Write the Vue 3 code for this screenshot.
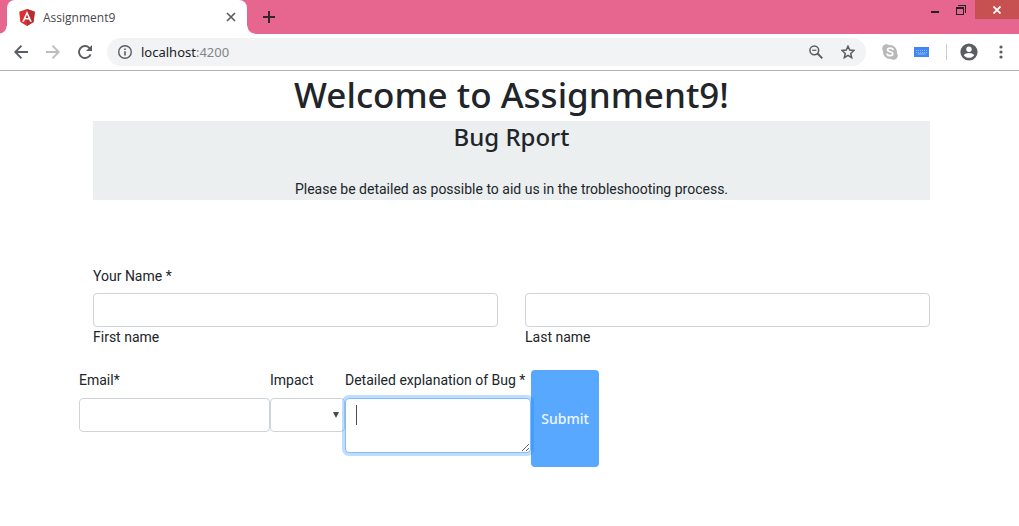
<script setup>
import { ref } from 'vue'

const address = ref('localhost:4200')
const firstName = ref('')
const lastName = ref('')
const email = ref('')
const impact = ref('')
const details = ref('')
</script>

<template>
  <div class="browser">
    <header class="tab-strip">
      <div class="tab">
        <svg class="favicon" width="16" height="17" viewBox="0 0 16 17" aria-hidden="true">
          <path fill="#dd2f32" d="M8 0 15.8 2.8 14.6 13 8 17 1.4 13 .2 2.8z" />
          <path fill="#b52e31" d="M8 0 15.8 2.8 14.6 13 8 17z" />
          <path fill="#fff" fill-rule="evenodd" d="M8 2 3.2 12.8H5L6 10.4h4l1 2.4h1.8zM8 5.4 9.4 8.9H6.6z" />
        </svg>
        <span class="tab-title">Assignment9</span>
        <button class="icon-button" type="button" aria-label="Close tab">
          <svg width="10" height="10" viewBox="0 0 10 10"><path d="M1 1l8 8M9 1 1 9" stroke="#5a5d61" stroke-width="1.7" /></svg>
        </button>
      </div>
      <button class="icon-button new-tab" type="button" aria-label="New tab">
        <svg width="12" height="12" viewBox="0 0 12 12"><path d="M6 0v12M0 6h12" stroke="#33262c" stroke-width="2" /></svg>
      </button>
      <div class="window-controls">
        <button class="icon-button minimize" type="button" aria-label="Minimize">
          <svg width="8" height="10" viewBox="0 0 8 10"><path d="M0 3h8v2H0z" fill="#222" /></svg>
        </button>
        <button class="icon-button restore" type="button" aria-label="Restore">
          <svg width="10" height="10" viewBox="0 0 10 10" shape-rendering="crispEdges" fill="#222">
            <path fill-rule="evenodd" d="M0 2h8v8H0zM1 4v5h6V4zM2 0h8v8H9V1H2z" />
          </svg>
        </button>
        <button class="icon-button close-window" type="button" aria-label="Close window">
          <svg width="8" height="8" viewBox="0 0 8 8"><path d="M.5.5l7 7M7.500.5l-7 7" stroke="#fff" stroke-width="1.8" /></svg>
        </button>
      </div>
    </header>

    <nav class="toolbar">
      <button class="icon-button nav-button" type="button" aria-label="Back">
        <svg width="14" height="14" viewBox="0 0 14 14" fill="none" stroke="#5a5d61" stroke-width="1.9"><path d="M14 7H1.500M7.500.7 1.300 7l6.200 6.300" /></svg>
      </button>
      <button class="icon-button nav-button" type="button" aria-label="Forward">
        <svg width="14" height="14" viewBox="0 0 14 14" fill="none" stroke="#bcbdbf" stroke-width="1.9"><path d="M0 7h12.500M6.500.7 12.700 7l-6.200 6.300" /></svg>
      </button>
      <button class="icon-button nav-button" type="button" aria-label="Reload">
        <svg width="14" height="14" viewBox="0 0 14 14"><path d="M12.600 9.300A6 6 0 1 1 11.300 2.800L12.400 4" fill="none" stroke="#5a5d61" stroke-width="1.900" /><path d="M14 0v6H8z" fill="#5a5d61" /></svg>
      </button>
      <div class="address-bar">
        <svg width="14" height="14" viewBox="0 0 14 14" aria-hidden="true"><circle cx="7" cy="7" r="6.300" fill="none" stroke="#5a5d61" stroke-width="1.400" /><path d="M6.200 3.500h1.600V5H6.200zM6.200 6.200h1.600v4.300H6.200z" fill="#5a5d61" /></svg>
        <a class="address" :href="'http://' + address">{{ address.split(':')[0] }}<span class="port">:{{ address.split(':')[1] }}</span></a>
        <button class="icon-button" type="button" aria-label="Zoom out">
          <svg width="14" height="14" viewBox="0 0 14 14" fill="none" stroke="#5a5d61" stroke-width="1.500"><circle cx="5.300" cy="5.300" r="4.400" /><path d="M8.500 8.500 13.300 13.300" stroke-width="1.900" /><path d="M3.200 5.300h4.200" stroke-width="1.200" /></svg>
        </button>
        <button class="icon-button" type="button" aria-label="Bookmark this page">
          <svg width="14" height="14" viewBox="0 0 14 14"><path d="M7 1.200 8.700 5.100 13 5.500 9.700 8.400 10.700 12.700 7 10.400 3.300 12.700 4.300 8.400 1 5.500 5.300 5.100z" fill="none" stroke="#5a5d61" stroke-width="1.500" /></svg>
        </button>
      </div>
      <div class="extensions">
        <button class="icon-button" type="button" aria-label="Skype">
          <svg width="16" height="16" viewBox="0 0 16 16"><circle cx="8" cy="8" r="7" fill="#b9b9b9" /><circle cx="4.500" cy="4.500" r="4.300" fill="#b9b9b9" /><circle cx="11.500" cy="11.500" r="4.300" fill="#b9b9b9" /><path d="M11 5.400C10.300 3.900 5.600 3.500 5.500 6c0 2.300 5.400 1.300 5.300 3.800-.1 2.400-4.600 2.300-5.700.4" fill="none" stroke="#fff" stroke-width="1.700" stroke-linecap="round" /></svg>
        </button>
        <button class="icon-button" type="button" aria-label="Keyboard">
          <svg width="15" height="10" viewBox="0 0 15 10"><path d="M0 0h15v10H0z" fill="#4285f4" /><path d="M2 3.500h11M2 5.500h11" stroke="#8fb8fa" stroke-dasharray="1 1" /><path d="M3.500 7h8" stroke="#8fb8fa" /></svg>
        </button>
        <span class="divider"></span>
        <button class="icon-button" type="button" aria-label="Profile">
          <svg width="18" height="18" viewBox="0 0 18 18"><circle cx="9" cy="9" r="8.600" fill="#5a5d61" /><circle cx="9" cy="6.200" r="2.700" fill="#fff" /><path d="M3.800 12.300c1.700-3.100 8.700-3.100 10.400 0-2.300 3.400-8.100 3.400-10.400 0z" fill="#fff" /></svg>
        </button>
        <button class="icon-button menu" type="button" aria-label="Menu">
          <svg width="4" height="14" viewBox="0 0 4 14" fill="#5a5d61"><circle cx="2" cy="2" r="1.600" /><circle cx="2" cy="7" r="1.600" /><circle cx="2" cy="12" r="1.600" /></svg>
        </button>
      </div>
    </nav>

    <main class="page">
      <div class="container">
        <h1>Welcome to Assignment9!</h1>
        <section class="intro">
          <h2>Bug Rport</h2>
          <p>Please be detailed as possible to aid us in the trobleshooting process.</p>
        </section>
        <form @submit.prevent>
          <fieldset class="name-group">
            <legend>Your Name *</legend>
            <div class="name-fields">
              <div>
                <input id="first-name" v-model="firstName" class="control" type="text">
                <label for="first-name">First name</label>
              </div>
              <div>
                <input id="last-name" v-model="lastName" class="control" type="text">
                <label for="last-name">Last name</label>
              </div>
            </div>
          </fieldset>
          <div class="report-row">
            <div class="field email-field">
              <label for="email">Email*</label>
              <input id="email" v-model="email" class="control" type="email">
            </div>
            <div class="field impact-field">
              <label for="impact">Impact</label>
              <div class="select-wrap">
                <select id="impact" v-model="impact" class="control">
                  <option value=""></option>
                </select>
                <svg class="arrow" width="6" height="6" viewBox="0 0 6 6" aria-hidden="true"><path d="M0 0h6L3 6z" fill="#444b52" /></svg>
              </div>
            </div>
            <div class="field details-field">
              <label for="details">Detailed explanation of Bug *</label>
              <div class="details-wrap">
                <textarea id="details" v-model="details" class="control active"></textarea>
                <span class="caret"></span>
              </div>
            </div>
            <button class="submit" type="submit">Submit</button>
          </div>
        </form>
      </div>
    </main>
  </div>
</template>

<style>
body {
  margin: 0;
  background: #fff;
}
</style>

<style scoped>
* {
  box-sizing: border-box;
}

.browser {
  font-family: "Noto Sans", "Open Sans", sans-serif;
  font-size: 14px;
  line-height: 21px;
  color: #212529;
}

svg {
  display: block;
}

.icon-button {
  display: flex;
  align-items: center;
  justify-content: center;
  padding: 0;
  border: 0;
  background: none;
}

.tab-strip {
  display: flex;
  height: 34px;
  background: #e6668f;
}

.tab {
  position: relative;
  display: flex;
  align-items: center;
  width: 240px;
  margin-left: 7px;
  padding: 0 11px 0 12px;
  background: #fff;
  border-radius: 8px 8px 0 0;
}

.tab::before,
.tab::after {
  content: "";
  position: absolute;
  bottom: 0;
  width: 8px;
  height: 8px;
}

.tab::before {
  right: 100%;
  background: radial-gradient(circle at 0 0, transparent 7px, #fff 8px);
}

.tab::after {
  left: 100%;
  background: radial-gradient(circle at 100% 0, transparent 7px, #fff 8px);
}

.tab-title {
  flex: 1;
  margin-left: 8px;
  font-family: "Open Sans", "Noto Sans", sans-serif;
  font-size: 12px;
  color: #45484c;
}

.new-tab {
  margin-left: 16px;
}

.window-controls {
  display: flex;
  align-items: flex-start;
  margin-left: auto;
}

.window-controls .icon-button {
  height: 19px;
}

.minimize {
  margin-right: 17px;
}

.minimize svg {
  margin-top: 6px;
}

.restore {
  margin-right: 9px;
}

.close-window {
  width: 44px;
  background: #c75050;
}

.toolbar {
  display: flex;
  align-items: center;
  height: 37px;
  padding-left: 14px;
  padding-right: 16px;
  border-bottom: 1px solid #b2b2b2;
}

.nav-button {
  margin-right: 18px;
}

.nav-button + .nav-button + .nav-button {
  margin-right: 15px;
}

.address-bar {
  display: flex;
  flex: 1;
  align-items: center;
  height: 28px;
  padding: 0 11px;
  border-radius: 14px;
  background: #f1f3f4;
}

.address {
  flex: 1;
  margin-left: 9px;
  font-size: 13px;
  color: #202124;
  text-decoration: none;
}

.port {
  color: #80868b;
}

.address-bar .icon-button + .icon-button {
  margin-left: 18px;
}

.extensions {
  display: flex;
  align-items: center;
  gap: 16px;
  margin-left: 16px;
}

.divider {
  width: 1px;
  height: 16px;
  margin: 0 -3px 0 1px;
  background: #ccc;
}

.menu {
  margin-left: 5px;
}

.page {
  padding-left: 4px;
  font-family: Roboto, "Open Sans", sans-serif;
}

.container {
  max-width: 865px;
  margin: 0 auto;
  padding: 0 14px;
}

h1,
h2,
.submit {
  font-family: "Noto Sans", "Open Sans", sans-serif;
  font-weight: 500;
  text-align: center;
}

h1 {
  margin: 0 0 3px;
  font-size: 35px;
  line-height: 47px;
}

h2 {
  margin: 0 0 27px;
  font-size: 24px;
  line-height: 31px;
}

.intro {
  background: #ebeff0;
  text-align: center;
}

p {
  margin: 0;
}

.name-group {
  min-width: 0;
  margin: 66px 0 0;
  padding: 0;
  border: 0;
}

legend {
  padding: 0;
}

.name-fields {
  display: grid;
  grid-template-columns: 1fr 1fr;
  gap: 27px;
  margin-top: 6px;
}

.control {
  display: block;
  width: 100%;
  height: 34px;
  margin: 0;
  padding: 5px 11px;
  border: 1px solid #ced4da;
  border-radius: 4px;
  outline: 0;
  background: #fff;
  color: #495057;
  font: inherit;
}

.name-fields label,
.field label {
  display: block;
  white-space: nowrap;
}

.report-row {
  display: flex;
  align-items: stretch;
  margin: 22px -14px 0;
}

.field label {
  margin-bottom: 7px;
}

.email-field {
  width: 191px;
}

.impact-field {
  width: 75px;
}

.details-field {
  width: 186px;
  z-index: 1;
}

.select-wrap,
.details-wrap {
  position: relative;
}

select.control {
  appearance: none;
}

.arrow {
  position: absolute;
  top: 14px;
  right: 6px;
}

textarea.control {
  height: 55px;
}

.control.active {
  border-color: #80bdff;
  box-shadow: 0 0 0 3px rgba(0, 123, 255, 0.25);
}

.caret {
  position: absolute;
  top: 7px;
  left: 11px;
  width: 1px;
  height: 20px;
  background: #495057;
}

.submit {
  width: 68px;
  height: 97px;
  padding: 0;
  border: 0;
  border-radius: 4px;
  background: #59a8ff;
  color: #eef6ff;
  font-size: 14px;
}
</style>
